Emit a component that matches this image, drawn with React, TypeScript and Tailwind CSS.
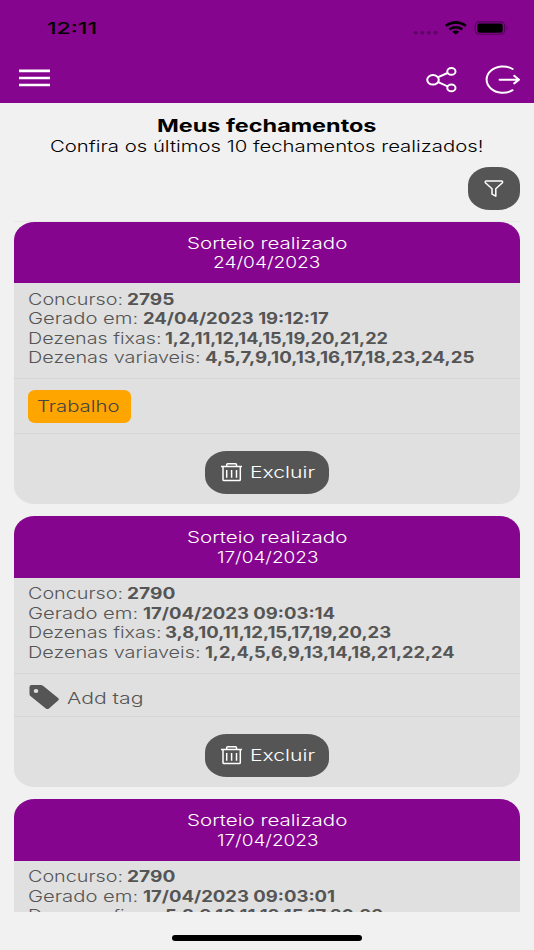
import { FC, ReactNode, useLayoutEffect, useRef, useState } from "react";

interface WideTextProps {
  width: number;
  children: ReactNode;
  className?: string;
}

// Stretches one line of text to the given width
const WideText: FC<WideTextProps> = ({ width, children, className = "" }) => {
  const ref = useRef<HTMLSpanElement>(null);
  const [scale, setScale] = useState(1);

  useLayoutEffect(() => {
    if (ref.current) setScale(width / ref.current.offsetWidth);
  }, [width, children]);

  return (
    <span className={`block shrink-0 text-left ${className}`} style={{ width }}>
      <span
        ref={ref}
        className="inline-block origin-left whitespace-nowrap align-top"
        style={{ transform: `scaleX(${scale})` }}
      >
        {children}
      </span>
    </span>
  );
};

interface Row {
  label: string;
  labelWidth: number;
  value: string;
  valueWidth: number;
}

interface Closing {
  date: string;
  dateWidth: number;
  rows: Row[];
  tag?: string;
}

const closings: Closing[] = [
  {
    date: "24/04/2023",
    dateWidth: 108,
    tag: "Trabalho",
    rows: [
      { label: "Concurso:", labelWidth: 95, value: "2795", valueWidth: 47 },
      { label: "Gerado em:", labelWidth: 110.5, value: "24/04/2023 19:12:17", valueWidth: 186 },
      { label: "Dezenas fixas:", labelWidth: 133, value: "1,2,11,12,14,15,19,20,21,22", valueWidth: 222.5 },
      { label: "Dezenas variaveis:", labelWidth: 172.5, value: "4,5,7,9,10,13,16,17,18,23,24,25", valueWidth: 269.5 },
    ],
  },
  {
    date: "17/04/2023",
    dateWidth: 101,
    rows: [
      { label: "Concurso:", labelWidth: 95, value: "2790", valueWidth: 48.5 },
      { label: "Gerado em:", labelWidth: 110.5, value: "17/04/2023 09:03:14", valueWidth: 192.5 },
      { label: "Dezenas fixas:", labelWidth: 133, value: "3,8,10,11,12,15,17,19,20,23", valueWidth: 226 },
      { label: "Dezenas variaveis:", labelWidth: 172.5, value: "1,2,4,5,6,9,13,14,18,21,22,24", valueWidth: 249.5 },
    ],
  },
  {
    date: "17/04/2023",
    dateWidth: 101,
    rows: [
      { label: "Concurso:", labelWidth: 95, value: "2790", valueWidth: 48.5 },
      { label: "Gerado em:", labelWidth: 110.5, value: "17/04/2023 09:03:01", valueWidth: 192.5 },
      { label: "Dezenas fixas:", labelWidth: 133, value: "5,8,9,10,11,12,15,17,20,23", valueWidth: 218.5 },
    ],
  },
];

const StatusIcons = () => (
  <svg className="h-4 w-24" viewBox="413 20 96 16" fill="none">
    <g fill="#000" opacity="0.3">
      <ellipse cx="415.7" cy="32.8" rx="2" ry="1.7" />
      <ellipse cx="422.3" cy="32.8" rx="2" ry="1.7" />
      <ellipse cx="428.8" cy="32.8" rx="2" ry="1.7" />
      <ellipse cx="435.5" cy="32.8" rx="2" ry="1.7" />
    </g>
    <g stroke="#000" strokeWidth="2.6">
      <path d="M445.8 25.8Q455.8 18.8 465.9 25.8" />
      <path d="M449.4 29.4Q455.8 25 462.3 29.4" />
    </g>
    <path d="M452.2 31.8Q455.8 29.4 459.4 31.8L455.8 34.4Z" fill="#000" />
    <rect x="475.2" y="21.9" width="29.5" height="12.4" rx="4" stroke="#000" strokeOpacity="0.4" strokeWidth="1.1" />
    <rect x="477.3" y="23.5" width="25.4" height="9.2" rx="2.2" fill="#000" />
    <path d="M506.7 26.4Q508.5 28.1 506.7 29.9Z" fill="#000" fillOpacity="0.5" />
  </svg>
);

const MenuIcon = () => (
  <svg className="h-[19px] w-8" viewBox="19 68 32 19" stroke="#fff" strokeWidth="2.7">
    <path d="M19 70.9H50M19 78H50M19 85H50" />
  </svg>
);

const ShareIcon = () => (
  <svg className="h-7 w-8" viewBox="426 66 32 28" fill="none" stroke="#fff" strokeWidth="2">
    <ellipse cx="433" cy="79.8" rx="5.8" ry="4.8" />
    <ellipse cx="451.4" cy="71.4" rx="4.1" ry="3.4" />
    <ellipse cx="451.4" cy="87.9" rx="4.1" ry="3.4" />
    <path d="M438.2 77.2L447.6 73M438.2 82.2L447.6 86.4" />
  </svg>
);

const LogoutIcon = () => (
  <svg className="h-[30px] w-9" viewBox="485 65 36 30" fill="none" stroke="#fff" strokeWidth="2" strokeLinecap="round">
    <path d="M512.6 69A16.3 13.2 0 1 0 512.6 90.2" />
    <path d="M499.6 79.7H518.8M514.2 75.8L519 79.7L514.2 83.4" strokeLinejoin="round" />
  </svg>
);

const FilterIcon = () => (
  <svg className="h-[18px] w-5" viewBox="484 180 20 18" fill="none" stroke="#fff" strokeWidth="1.5" strokeLinejoin="round">
    <path d="M486.2 182.1Q484.8 182.1 485.4 183.7L492 189.7V195.1L495.8 197.2V189.7L502.4 183.7Q503 182.1 501.6 182.1Z" />
  </svg>
);

const TrashIcon = () => (
  <svg className="h-5 w-[22px]" viewBox="220 462 22 20" fill="none" stroke="#fff" strokeWidth="1.5">
    <path d="M221 466.4H242M226.7 466.2V464.7Q226.7 463.8 227.7 463.8H235.5Q236.5 463.8 236.5 464.7V466.2" />
    <path d="M223 466.5V479.5Q223 480.6 224 480.6H239.3Q240.3 480.6 240.3 479.5V466.5" />
    <path d="M226.7 470V477.8M231.6 470V477.8M236.5 470V477.8" />
  </svg>
);

const TagIcon = () => (
  <svg className="h-[25px] w-[30px]" viewBox="29 685 30 25">
    <path
      d="M31.5 685.1H40.7Q42 685.1 43 685.8L58.1 698Q59.5 699.2 58.1 700.5L49 708.4Q47.4 709.7 45.8 708.4L30.4 696Q29.5 695.2 29.5 694.2V686.9Q29.5 685.1 31.5 685.1Z"
      fill="#555"
    />
    <ellipse cx="36" cy="691" rx="2.3" ry="2" fill="#e0e0e0" />
  </svg>
);

const ClosingCard: FC<{ closing: Closing }> = ({ closing }) => {
  const { date, dateWidth, rows, tag } = closing;

  return (
    <article className="shrink-0 overflow-hidden rounded-[21px/18px] bg-[#e0e0e0] text-[#555]">
      <header className="flex h-[61.5px] flex-col items-center bg-[#85058f] pt-[12px] text-white">
        <WideText width={160}>Sorteio realizado</WideText>
        <WideText width={dateWidth}>{date}</WideText>
      </header>
      <div className="h-[96px] border-b border-[#d6d6d6] pl-[13.5px] pt-[6.5px]">
        {rows.map((row) => (
          <div key={row.label} className="flex gap-[4.5px]">
            <WideText width={row.labelWidth}>{row.label}</WideText>
            <WideText width={row.valueWidth} className="font-bold">
              {row.value}
            </WideText>
          </div>
        ))}
      </div>
      {tag ? (
        <div className="flex h-[55px] items-center border-b border-[#d6d6d6] pl-[13.5px]">
          <span className="flex h-[33px] w-[103.5px] items-center justify-center rounded-[7px/6px] bg-[#ffa500] pr-px pt-[2px] text-[#444]">
            <WideText width={83}>{tag}</WideText>
          </span>
        </div>
      ) : (
        <div className="flex h-[43.5px] items-center gap-2 border-b border-[#d6d6d6] pl-[15px] pt-[6px]">
          <TagIcon />
          <WideText width={77} className="pt-px">
            Add tag
          </WideText>
        </div>
      )}
      <div className="flex h-[70px] justify-center pt-[17px]">
        <button className="flex h-[42.5px] w-[123.5px] items-center gap-2 rounded-[22px/18px] bg-[#555] pl-[15px] text-white">
          <TrashIcon />
          <WideText width={64.5} className="pt-px">
            Excluir
          </WideText>
        </button>
      </div>
    </article>
  );
};

const App = () => {
  return (
    <div className="flex h-[950px] w-[534px] flex-col overflow-hidden bg-[#f1f1f1] font-['Inter','Liberation_Sans',sans-serif] text-[15.4px] font-light leading-[19.5px] text-black">
      <header className="h-[102.5px] shrink-0 bg-[#85058f]">
        <div className="flex h-14 items-center justify-between pl-[46.5px] pr-[25px]">
          <WideText width={50} className="pt-[2px] text-[16.2px] font-medium">
            12:11
          </WideText>
          <StatusIcons />
        </div>
        <nav className="flex h-[47px] items-center justify-between pl-[19px] pr-[13px]">
          <button className="-mt-[4px]">
            <MenuIcon />
          </button>
          <div className="flex items-center gap-[27px]">
            <ShareIcon />
            <LogoutIcon />
          </div>
        </nav>
      </header>
      <main className="flex h-[809px] shrink-0 flex-col overflow-hidden px-[14px]">
        <div className="flex h-[64px] shrink-0 flex-col items-center pt-[13.5px]">
          <WideText width={219.5} className="h-[20.5px] text-[17.4px] font-bold">
            Meus fechamentos
          </WideText>
          <WideText width={434}>Confira os últimos 10 fechamentos realizados!</WideText>
        </div>
        <div className="flex h-[55px] shrink-0 justify-end border-b border-[#e8e8e8]">
          <button className="flex h-[43px] w-[52px] items-center justify-center rounded-[22px/18px] bg-[#555]">
            <FilterIcon />
          </button>
        </div>
        <div className="flex flex-col gap-[12px]">
          {closings.map((closing, i) => (
            <ClosingCard key={i} closing={closing} />
          ))}
        </div>
      </main>
      <footer className="flex grow justify-center pt-[23.5px]">
        <div className="h-[5.5px] w-[190px] rounded-full bg-black" />
      </footer>
    </div>
  );
};

export default App;
